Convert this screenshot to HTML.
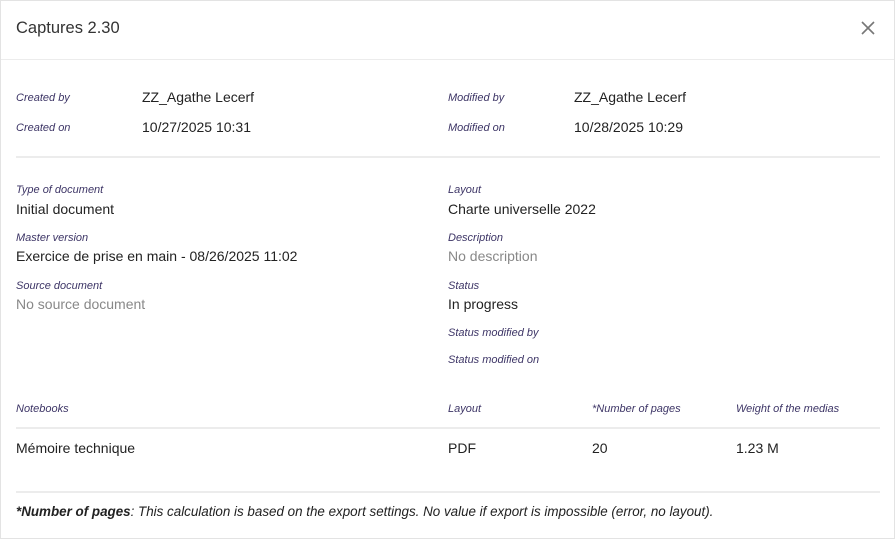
<!DOCTYPE html><html><head><meta charset="utf-8"><style>
*{margin:0;padding:0;box-sizing:border-box}
body{width:895px;height:539px;background:#fff;font-family:"Liberation Sans",sans-serif;position:relative;overflow:hidden}
.frame{position:absolute;left:0;top:0;width:895px;height:539px;border:1px solid #e3e3e3}
.a{position:absolute;white-space:nowrap}
.l{font-size:11px;font-style:italic;color:#3d3566}
.v{font-size:14px;color:#222}
.g{color:#888}
.hr{position:absolute;left:16px;width:864px;height:2px;background:#ececec}
</style></head><body>
<div class="frame"></div>
<div class="a" style="left:16px;top:19px;font-size:16.5px;color:#333">Captures 2.30</div>
<svg class="a" style="left:860px;top:20px" width="16" height="16" viewBox="0 0 16 16"><path d="M2 2L14 14M14 2L2 14" stroke="#777" stroke-width="1.6"/></svg>
<div class="a" style="left:1px;top:59px;width:893px;height:1px;background:#ececec"></div>

<div class="a l" style="left:16px;top:92px">Created by</div>
<div class="a v" style="left:142px;top:89px">ZZ_Agathe Lecerf</div>
<div class="a l" style="left:16px;top:122px">Created on</div>
<div class="a v" style="left:142px;top:119px">10/27/2025 10:31</div>
<div class="a l" style="left:448px;top:92px">Modified by</div>
<div class="a v" style="left:574px;top:89px">ZZ_Agathe Lecerf</div>
<div class="a l" style="left:448px;top:122px">Modified on</div>
<div class="a v" style="left:574px;top:119px">10/28/2025 10:29</div>
<div class="hr" style="top:156px"></div>

<div class="a l" style="left:16px;top:184px">Type of document</div>
<div class="a v" style="left:16px;top:201px">Initial document</div>
<div class="a l" style="left:16px;top:232px">Master version</div>
<div class="a v" style="left:16px;top:248px">Exercice de prise en main - 08/26/2025 11:02</div>
<div class="a l" style="left:16px;top:280px">Source document</div>
<div class="a v g" style="left:16px;top:296px">No source document</div>

<div class="a l" style="left:448px;top:184px">Layout</div>
<div class="a v" style="left:448px;top:201px">Charte universelle 2022</div>
<div class="a l" style="left:448px;top:232px">Description</div>
<div class="a v g" style="left:448px;top:248px">No description</div>
<div class="a l" style="left:448px;top:280px">Status</div>
<div class="a v" style="left:448px;top:296px">In progress</div>
<div class="a l" style="left:448px;top:327px">Status modified by</div>
<div class="a l" style="left:448px;top:354px">Status modified on</div>

<div class="a l" style="left:16px;top:403px">Notebooks</div>
<div class="a l" style="left:448px;top:403px">Layout</div>
<div class="a l" style="left:592px;top:403px">*Number of pages</div>
<div class="a l" style="left:736px;top:403px">Weight of the medias</div>
<div class="hr" style="top:427px"></div>
<div class="a v" style="left:16px;top:440px">Mémoire technique</div>
<div class="a v" style="left:448px;top:440px">PDF</div>
<div class="a v" style="left:592px;top:440px">20</div>
<div class="a v" style="left:736px;top:440px">1.23 M</div>
<div class="hr" style="top:491px"></div>
<div class="a" style="left:16px;top:504px;font-size:13.4px;font-style:italic;color:#222"><b>*Number of pages</b>: This calculation is based on the export settings. No value if export is impossible (error, no layout).</div>
</body></html>
